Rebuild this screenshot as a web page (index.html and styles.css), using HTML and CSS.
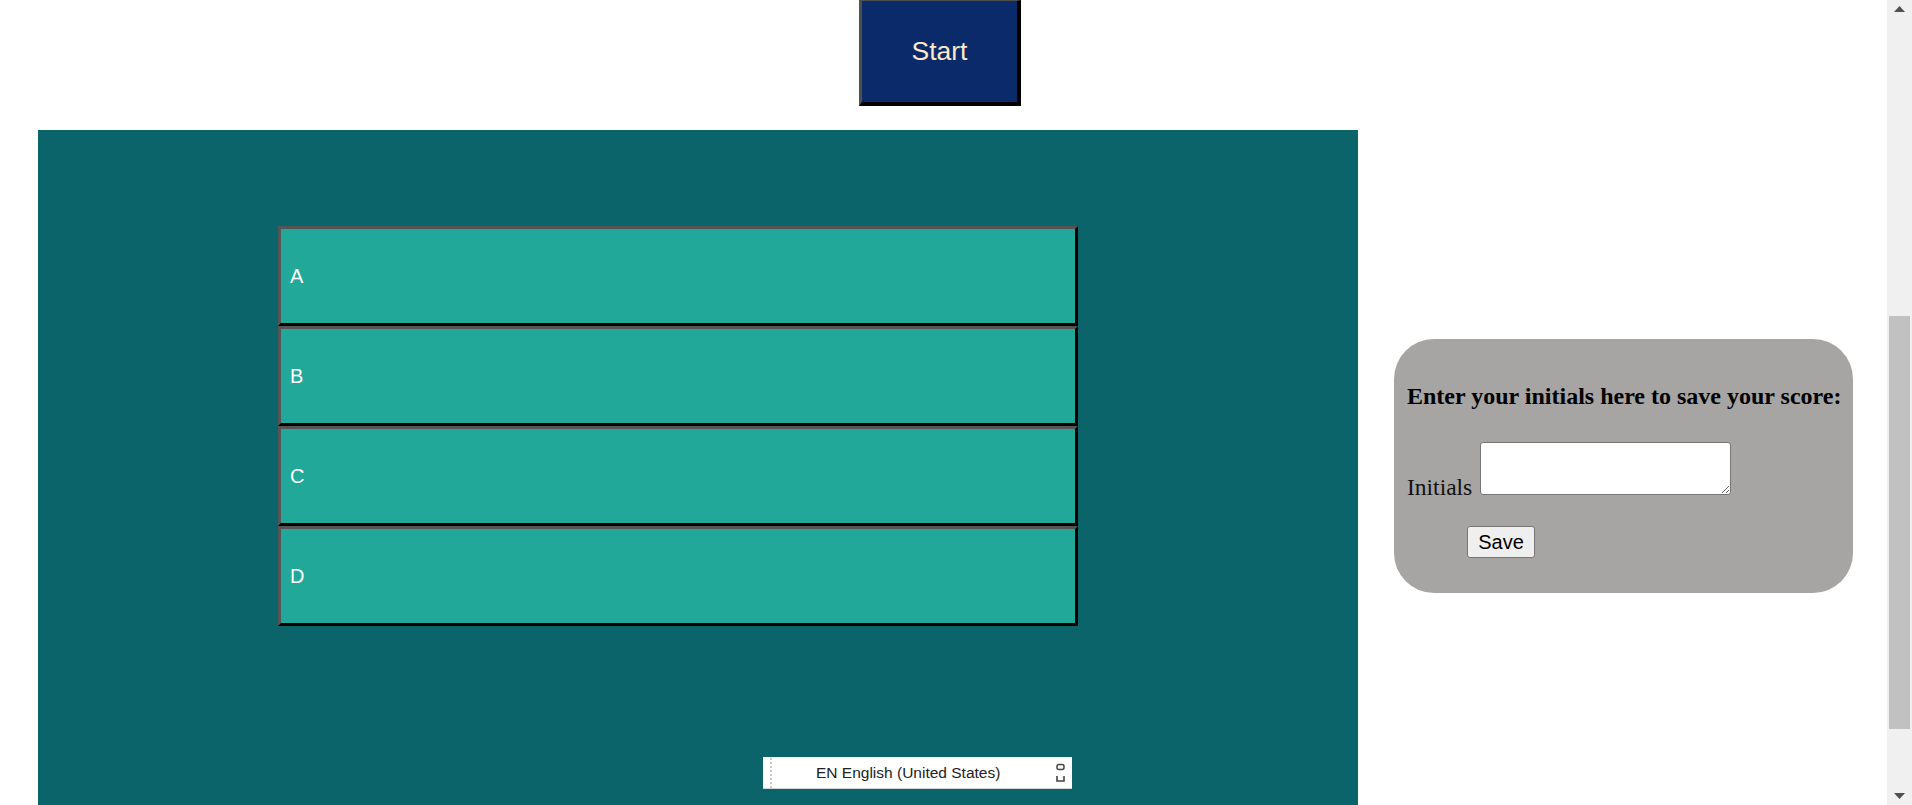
FILE: index.html
```html
<!DOCTYPE html>
<html lang="en">
<head>
<meta charset="utf-8">
<title>Quiz</title>
<link rel="stylesheet" href="styles.css">
</head>
<body>
<div class="page">
  <header class="top">
    <button class="start" type="button">Start</button>
  </header>
  <main class="main">
    <section class="quiz">
      <div class="answers">
        <button class="answer" type="button">A</button>
        <button class="answer" type="button">B</button>
        <button class="answer" type="button">C</button>
        <button class="answer" type="button">D</button>
      </div>
    </section>
    <aside class="save-panel">
      <h2 class="save-title">Enter your initials here to save your score:</h2>
      <div class="save-row"><label class="save-label" for="initials">Initials</label> <textarea id="initials" class="save-input"></textarea></div>
      <button class="save-btn" type="button">Save</button>
    </aside>
  </main>
</div>

<div class="langbar">
  <span class="lang-grip"></span>
  <span class="lang-text">EN English (United States)</span>
  <span class="lang-icons">
    <svg width="9" height="22" viewBox="0 0 9 22" aria-hidden="true">
      <rect x="1" y="2.5" width="7" height="5" rx="2" fill="none" stroke="#444" stroke-width="1.5"/>
      <path d="M1 14 V19 H8 V14" fill="none" stroke="#444" stroke-width="1.6"/>
    </svg>
  </span>
</div>

<div class="scrollbar">
  <svg class="arrow arrow-up" width="11" height="6" viewBox="0 0 11 6" aria-hidden="true"><path d="M0 6 L5.5 0 L11 6 Z" fill="#505050"/></svg>
  <div class="thumb"></div>
  <svg class="arrow arrow-down" width="11" height="6" viewBox="0 0 11 6" aria-hidden="true"><path d="M0 0 L5.5 6 L11 0 Z" fill="#505050"/></svg>
</div>
</body>
</html>
```
FILE: styles.css
```css
html, body {
  margin: 0;
  padding: 0;
  background: #ffffff;
  overflow: hidden;
}

.page {
  width: 1887px;
  height: 805px;
  overflow: hidden;
}

.top {
  height: 106px;
  padding-left: 859px;
}

.start {
  width: 162px;
  height: 106px;
  box-sizing: border-box;
  margin: 0;
  padding: 0;
  border-style: solid;
  border-width: 1px 4px 4px 3px;
  border-color: #505050 #000000 #000000 #505050;
  background: #0b2a69;
  color: #fbe9c9;
  font-family: "Liberation Sans", Arial, sans-serif;
  font-size: 26.5px;
  display: flex;
  align-items: center;
  justify-content: center;
}

.main {
  display: flex;
  align-items: flex-start;
  margin-top: 24px;
}

.quiz {
  margin-left: 38px;
  width: 1320px;
  height: 675px;
  box-sizing: border-box;
  padding: 96px 0 0 240px;
  background: #0c646b;
}

.answers {
  width: 800px;
  display: flex;
  flex-direction: column;
}

.answer {
  height: 100px;
  box-sizing: border-box;
  margin: 0;
  padding: 0 0 0 9px;
  border-style: solid;
  border-width: 3px;
  border-color: #555555 #000000 #000000 #555555;
  background: #21a899;
  color: #ffffff;
  font-family: "Liberation Sans", Arial, sans-serif;
  font-size: 20px;
  text-align: left;
  display: flex;
  align-items: center;
}

.save-panel {
  margin-left: 36px;
  margin-top: 209px;
  width: 459px;
  height: 254px;
  box-sizing: border-box;
  padding: 0 13px;
  background: #a7a5a3;
  border-radius: 40px;
  font-family: "Liberation Serif", "Times New Roman", serif;
  color: #000000;
}

.save-title {
  margin: 44px 0 0 0;
  font-size: 24px;
  line-height: 26px;
  font-weight: bold;
  white-space: nowrap;
}

.save-row {
  margin-top: 33px;
  font-size: 23.5px;
  line-height: 26px;
  color: #111111;
}

.save-input {
  width: 251px;
  height: 53px;
  box-sizing: border-box;
  margin: 0 0 0 2px;
  padding: 2px;
  border: 1px solid #767676;
  border-radius: 3px;
  background: #ffffff;
  vertical-align: baseline;
}

.save-btn {
  display: block;
  margin: 26px 0 0 60px;
  width: 68px;
  height: 32px;
  box-sizing: border-box;
  padding: 0;
  border: 1px solid #767676;
  border-radius: 3px;
  background: #efefef;
  color: #000000;
  font-family: "Liberation Sans", Arial, sans-serif;
  font-size: 20px;
}

.langbar {
  position: fixed;
  left: 763px;
  top: 757px;
  width: 309px;
  height: 32px;
  box-sizing: border-box;
  background: #ffffff;
  border-bottom: 1px solid #d4d4d4;
  display: flex;
  align-items: center;
  font-family: "Liberation Sans", Arial, sans-serif;
  font-size: 15.5px;
  color: #222222;
}

.lang-grip {
  margin-left: 7px;
  width: 2px;
  height: 30px;
  background-image: linear-gradient(#c8c8c8 50%, transparent 50%);
  background-size: 2px 4px;
}

.lang-text {
  margin-left: 44px;
  white-space: nowrap;
}

.lang-icons {
  margin-left: auto;
  margin-right: 7px;
  display: flex;
}

.scrollbar {
  position: fixed;
  right: 0;
  top: 0;
  width: 25px;
  height: 805px;
  background: #f0f0f0;
}

.thumb {
  position: absolute;
  left: 2px;
  top: 316px;
  width: 21px;
  height: 413px;
  background: #c1c1c1;
}

.arrow {
  position: absolute;
  left: 7px;
}

.arrow-up {
  top: 6px;
}

.arrow-down {
  bottom: 6px;
}
```
